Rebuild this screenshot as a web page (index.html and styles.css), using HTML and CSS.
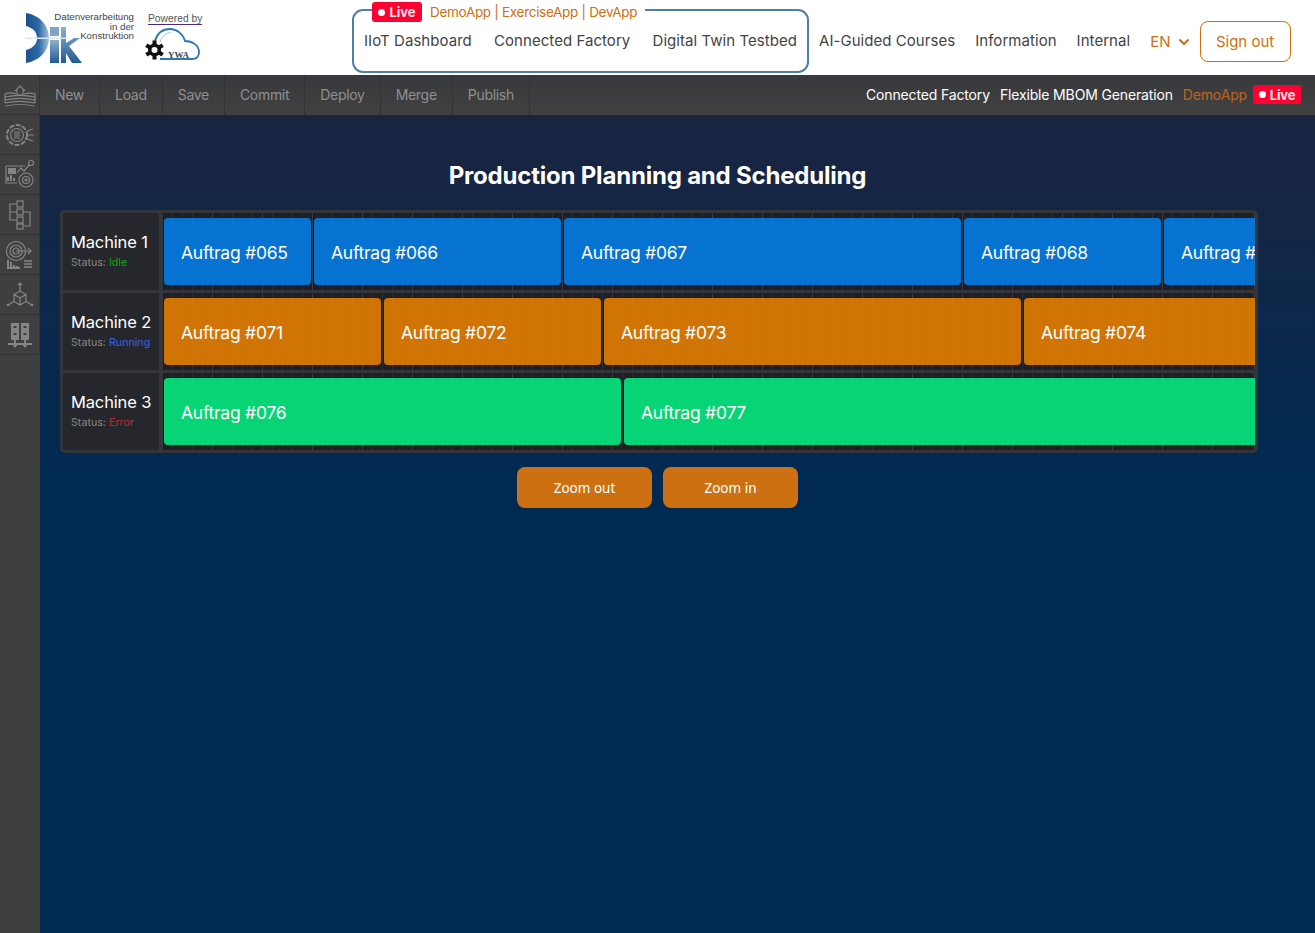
FILE: index.html
```html
<!DOCTYPE html>
<html lang="en">

<head>
    <meta charset="UTF-8">
    <meta name="viewport" content="width=device-width, initial-scale=1.0">
    <title>Production Planning and Scheduling</title>
    <link rel="stylesheet" href="styles.css">
</head>

<body>

    <header class="site-header">
        <div class="logo-group">
            <div class="dik-logo">
                <svg class="dik-mark" width="58" height="51" viewBox="0 0 58 51">
                    <defs>
                        <linearGradient id="dikBlue" x1="0" y1="0" x2="1" y2="0">
                            <stop offset="0" stop-color="#1d4f8c" />
                            <stop offset="0.55" stop-color="#2a6aa8" />
                            <stop offset="1" stop-color="#a9c0d6" />
                        </linearGradient>
                        <linearGradient id="dikSteel" x1="0" y1="0" x2="0" y2="1">
                            <stop offset="0" stop-color="#8fb0cc" />
                            <stop offset="1" stop-color="#1f5a96" />
                        </linearGradient>
                    </defs>
                    <path d="M1 0C14 2 24 12 24 25C24 38 14 48 1 50V37C8 35 12 31 12 25C12 19 8 15 1 13Z" fill="url(#dikBlue)" />
                    <rect x="25" y="14" width="9" height="9" fill="#7fa4c4" />
                    <rect x="25" y="27" width="9" height="23" fill="url(#dikSteel)" />
                    <path d="M36 14H41V30L49 25H55L44 33L57 50H47L41 40V50H36Z" fill="url(#dikSteel)" />
                    <rect x="0" y="24.500" width="42" height="1.500" fill="#dbe6ef" />
                </svg>
                <div class="dik-text">Datenverarbeitung<br>in der<br>Konstruktion</div>
            </div>
            <div class="powered">
                <a class="powered-link" href="#">Powered by</a>
                <svg width="58" height="36" viewBox="0 0 58 36">
                    <path d="M11 15C13 8 18 3 26 3C33 3 39 8 41 15C48 15 55 19 55 26C55 31 52 33 48 33H16" fill="none" stroke="#2c78b4" stroke-width="1.800" />
                    <path d="M16 16C18 10 22 7 27 6.500" fill="none" stroke="#a7c6de" stroke-width="1" />
                    <g fill="#111">
                        <circle cx="10.500" cy="24" r="6.500" />
                        <rect x="8.500" y="14.500" width="4" height="19" />
                        <rect x="8.500" y="14.500" width="4" height="19" transform="rotate(60 10.500 24)" />
                        <rect x="8.500" y="14.500" width="4" height="19" transform="rotate(-60 10.500 24)" />
                    </g>
                    <circle cx="10.500" cy="24" r="3" fill="#fff" />
                    <text class="ywa-text" x="24" y="32">YWA</text>
                </svg>
            </div>
        </div>

        <nav class="main-nav">
            <div class="app-frame">
                <div class="app-legend">
                    <span class="live-badge"><i class="live-dot"></i>Live</span>
                    <span class="app-links">DemoApp | ExerciseApp | DevApp</span>
                </div>
                <a class="nav-link" href="#">IIoT Dashboard</a>
                <a class="nav-link" href="#">Connected Factory</a>
                <a class="nav-link" href="#">Digital Twin Testbed</a>
            </div>
            <a class="nav-link" href="#">AI-Guided Courses</a>
            <a class="nav-link" href="#">Information</a>
            <a class="nav-link" href="#">Internal</a>
            <div class="lang-select">EN
                <svg width="12" height="8" viewBox="0 0 12 8">
                    <path d="M1.500 1.500L6 6L10.500 1.500" fill="none" stroke="#cc7011" stroke-width="2" />
                </svg>
            </div>
            <button class="sign-out">Sign out</button>
        </nav>
    </header>

    <div class="app-body">
        <aside class="sidebar">
            <div class="side-item">
                <svg class="side-icon" viewBox="0 0 32 32">
                    <path d="M11 12L16 7L21 12M13 11V16H19V11" />
                    <path d="M1 15C7 13 10 14 12 15M20 15C24 14 28 14 31 15M1 18C10 16 22 16 31 18M1 21C10 19 22 19 31 21M1 24C10 22 22 22 31 24M2 27C10 25 22 25 30 27M1 15V24M31 15V24" />
                </svg>
            </div>
            <div class="side-item">
                <svg class="side-icon" viewBox="0 0 32 32">
                    <circle cx="13" cy="16" r="10" stroke-dasharray="5 1.500" stroke-width="2" />
                    <circle cx="13" cy="16" r="6.500" />
                    <path d="M10 13H16M10 15H16M10 17H16M10 19H16" />
                    <path d="M24 16H30M23 12L29 10M23 20L29 22" />
                </svg>
            </div>
            <div class="side-item">
                <svg class="side-icon" viewBox="0 0 32 32">
                    <path d="M2 7H21M2 7V24H13" />
                    <rect class="fill" x="4" y="9" width="8" height="6" />
                    <path d="M4 22V18M7 22V16M10 22V19" stroke-width="2" />
                    <path d="M13 14L17 9L20 12L25 6" />
                    <circle cx="27" cy="4" r="2.500" />
                    <circle cx="22" cy="21" r="7" />
                    <circle cx="22" cy="21" r="3.500" />
                    <circle class="fill" cx="22" cy="21" r="1.500" />
                </svg>
            </div>
            <div class="side-item">
                <svg class="side-icon" viewBox="0 0 32 32">
                    <rect x="13" y="2" width="6" height="6" />
                    <rect x="13" y="10" width="6" height="6" />
                    <rect x="13" y="18" width="6" height="6" />
                    <rect x="13" y="25" width="6" height="5" />
                    <path d="M13 5H6V13H13M6 13V21H13M19 13H26V27H19" />
                </svg>
            </div>
            <div class="side-item">
                <svg class="side-icon" viewBox="0 0 32 32">
                    <circle cx="12" cy="12" r="9.500" />
                    <circle cx="12" cy="12" r="6" />
                    <circle cx="12" cy="12" r="3" />
                    <path d="M12 12H27M24 9L27 12L24 15" />
                    <path d="M3 29H16M4 28V21M7 28V23M10 28V26M13 28V27" stroke-width="2" />
                    <path d="M20 22H28M20 25H28M20 28H28" stroke-width="1.500" />
                </svg>
            </div>
            <div class="side-item">
                <svg class="side-icon" viewBox="0 0 32 32">
                    <path d="M16 12L22 15.500V22.500L16 26L10 22.500V15.500ZM10 15.500L16 19L22 15.500M16 19V26" />
                    <path d="M16 12V4M14 6L16 4L18 6M22 22.500L28 26M10 22.500L4 26" />
                    <circle class="fill" cx="28" cy="26" r="1.300" />
                    <circle class="fill" cx="4" cy="26" r="1.300" />
                </svg>
            </div>
            <div class="side-item">
                <svg class="side-icon" viewBox="0 0 32 32">
                    <rect class="fill" x="7" y="4" width="8" height="17" />
                    <rect class="fill" x="17" y="4" width="8" height="17" />
                    <path class="cut" d="M9.500 8H12.500M19.500 8H22.500M9.500 15H12.500M19.500 15H22.500" />
                    <path d="M4 25H28M11 21V28M21 21V28" stroke-width="2" />
                    <path class="fill" d="M7 24L11 29L15 24ZM17 24L21 29L25 24Z" />
                </svg>
            </div>
        </aside>

        <div class="workspace">
            <div class="toolbar">
                <div class="tool-list">
                    <a class="tool-link" href="#">New</a>
                    <a class="tool-link" href="#">Load</a>
                    <a class="tool-link" href="#">Save</a>
                    <a class="tool-link" href="#">Commit</a>
                    <a class="tool-link" href="#">Deploy</a>
                    <a class="tool-link" href="#">Merge</a>
                    <a class="tool-link" href="#">Publish</a>
                </div>
                <div class="crumbs">
                    <span>Connected Factory</span>
                    <span>Flexible MBOM Generation</span>
                    <span class="crumb-app">DemoApp</span>
                    <span class="live-badge live-small"><i class="live-dot"></i>Live</span>
                </div>
            </div>

            <main class="content">
                <h1 class="page-title">Production Planning and Scheduling</h1>

                <div class="gantt">
                    <div class="gantt-row">
                        <div class="machine">
                            <div class="machine-name">Machine 1</div>
                            <div class="machine-status">Status: <span class="idle">Idle</span></div>
                        </div>
                        <div class="track">
                            <div class="job job-blue" style="width: 147px">Auftrag #065</div>
                            <div class="job job-blue" style="width: 247px">Auftrag #066</div>
                            <div class="job job-blue" style="width: 397px">Auftrag #067</div>
                            <div class="job job-blue" style="width: 197px">Auftrag #068</div>
                            <div class="job job-blue" style="width: 247px">Auftrag #069</div>
                        </div>
                    </div>
                    <div class="gantt-row">
                        <div class="machine">
                            <div class="machine-name">Machine 2</div>
                            <div class="machine-status">Status: <span class="running">Running</span></div>
                        </div>
                        <div class="track">
                            <div class="job job-orange" style="width: 217px">Auftrag #071</div>
                            <div class="job job-orange" style="width: 217px">Auftrag #072</div>
                            <div class="job job-orange" style="width: 417px">Auftrag #073</div>
                            <div class="job job-orange" style="width: 317px">Auftrag #074</div>
                        </div>
                    </div>
                    <div class="gantt-row">
                        <div class="machine">
                            <div class="machine-name">Machine 3</div>
                            <div class="machine-status">Status: <span class="error">Error</span></div>
                        </div>
                        <div class="track">
                            <div class="job job-green" style="width: 457px">Auftrag #076</div>
                            <div class="job job-green" style="width: 797px">Auftrag #077</div>
                        </div>
                    </div>
                </div>

                <div class="zoom-buttons">
                    <button class="zoom-btn">Zoom out</button>
                    <button class="zoom-btn">Zoom in</button>
                </div>
            </main>
        </div>
    </div>

</body>

</html>
```

FILE: styles.css
```css
* {
    box-sizing: border-box;
}

html,
body {
    height: 100%;
}

body {
    margin: 0;
    font-family: 'Inter', 'Open Sans', sans-serif;
    display: flex;
    flex-direction: column;
    overflow: hidden;
    background-color: #002a52;
}

a {
    text-decoration: none;
}

/* header */
.site-header {
    height: 75px;
    flex: none;
    display: flex;
    background-color: #fff;
}

.logo-group {
    width: 352px;
    flex: none;
    display: flex;
    padding: 13px 0 0 25px;
}

.dik-logo {
    position: relative;
    width: 110px;
    height: 51px;
}

.dik-text {
    position: absolute;
    top: -1px;
    right: 1px;
    font-family: 'Liberation Sans', sans-serif;
    font-size: 9.700px;
    line-height: 9.500px;
    text-align: right;
    white-space: nowrap;
    color: #444;
}

.powered {
    margin: 0 0 0 13px;
    display: flex;
    flex-direction: column;
    align-items: flex-start;
}

.powered-link {
    font-family: 'Liberation Sans', sans-serif;
    font-size: 10.300px;
    line-height: 11px;
    color: #555;
    border-bottom: 1px solid #4a2a80;
}

.powered svg {
    margin: 1px 0 0 -4px;
}

.ywa-text {
    font-family: 'Liberation Serif', serif;
    font-size: 9px;
    font-weight: bold;
    fill: #444;
}

.main-nav {
    flex: 1;
    display: flex;
    align-items: flex-start;
}

.app-frame {
    position: relative;
    width: 457px;
    height: 64px;
    margin-top: 9px;
    padding: 20px 10px 0;
    display: flex;
    justify-content: space-between;
    border: 2px solid #4f7fa5;
    border-radius: 11px;
}

.app-legend {
    position: absolute;
    top: -10px;
    left: 18px;
    height: 22px;
    padding-right: 8px;
    display: flex;
    align-items: center;
    gap: 8px;
    background-color: #fff;
}

.app-links {
    font-size: 13.500px;
    letter-spacing: -0.3px;
    color: #cc7011;
    margin-top: -1px;
}

.live-badge {
    display: inline-flex;
    align-items: center;
    justify-content: center;
    gap: 4px;
    width: 50px;
    height: 20px;
    font-size: 13px;
    font-weight: 700;
    color: #f5e6e6;
    background-color: #ff0033;
    border-radius: 3px;
}

.live-dot {
    width: 7px;
    height: 7px;
    border-radius: 50%;
    background-color: #fff;
}

.nav-link {
    font-size: 15px;
    line-height: 20px;
    letter-spacing: 0.05px;
    color: #444;
    white-space: nowrap;
}

.main-nav>.nav-link {
    margin: 31px 0 0 20px;
}

.main-nav>.app-frame+.nav-link {
    margin-left: 10px;
}

.lang-select {
    margin: 32px 0 0 20px;
    display: flex;
    align-items: center;
    gap: 7px;
    font-size: 15px;
    line-height: 20px;
    color: #cc7011;
}

.sign-out {
    width: 91px;
    height: 41px;
    margin: 21px 0 0 10px;
    font-family: inherit;
    font-size: 15px;
    color: #cc7011;
    background-color: #fff;
    border: 1px solid #cc7011;
    border-radius: 8px;
}

/* body area */
.app-body {
    flex: 1;
    display: flex;
    min-height: 0;
}

.sidebar {
    width: 40px;
    flex: none;
    background-color: #3f3f3f;
}

.side-item {
    height: 40px;
    display: flex;
    align-items: center;
    justify-content: center;
    border-right: 1px solid #333;
    border-bottom: 1px solid #333;
}

.side-icon {
    width: 32px;
    height: 32px;
    fill: none;
    stroke: #858585;
    stroke-width: 1.200;
}

.side-icon .fill {
    fill: #858585;
    stroke: none;
}

.side-icon .cut {
    stroke: #3f3f3f;
    stroke-width: 2;
}

.workspace {
    flex: 1;
    min-width: 0;
    display: flex;
    flex-direction: column;
}

.toolbar {
    height: 40px;
    flex: none;
    display: flex;
    justify-content: space-between;
    background: linear-gradient(#38393d, #414141);
}

.tool-list {
    display: flex;
}

.tool-link {
    padding: 0 15px;
    font-size: 14px;
    line-height: 39px;
    letter-spacing: -0.3px;
    color: #8f8f8f;
    border-right: 1px solid #333;
}

.crumbs {
    display: flex;
    align-items: center;
    gap: 10px;
    padding: 0 14px 1px 0;
    font-size: 14px;
    letter-spacing: -0.15px;
    color: #fff;
}

.crumb-app {
    color: #c0641a;
}

.live-small {
    width: 48px;
    height: 19px;
    margin-left: -4px;
}

.content {
    flex: 1;
    padding: 0 60px 0 20px;
    background: linear-gradient(#1a2440, #002a52 45%);
}

.page-title {
    margin: 46px 0 19px;
    font-size: 24px;
    line-height: 30px;
    font-weight: 700;
    letter-spacing: -0.2px;
    text-align: center;
    color: #fff;
}

/* gantt */
.gantt {
    margin-right: -3px;
    padding: 3px;
    display: flex;
    flex-direction: column;
    gap: 3px;
    background-color: #33353a;
    border-radius: 5px;
}

.gantt-row {
    display: flex;
    height: 77px;
}

.machine {
    width: 96px;
    flex: none;
    padding: 19px 0 0 8px;
    background-color: #26272c;
}

.machine-name {
    font-size: 16.500px;
    line-height: 20px;
    letter-spacing: -0.15px;
    color: #fff;
    white-space: nowrap;
}

.machine-status {
    margin-top: 4px;
    font-size: 10.700px;
    line-height: 13px;
    color: #85858a;
    white-space: nowrap;
}

.idle {
    color: #12a012;
}

.running {
    color: #3f5fe6;
}

.error {
    color: #bb2d33;
}

.track {
    position: relative;
    flex: 1;
    min-width: 0;
    margin-left: 4px;
    padding: 5px 0 5px 1px;
    display: flex;
    gap: 3px;
    overflow: hidden;
    background-color: #1e1f24;
    background-image:
        repeating-linear-gradient(90deg, #36383d 0, #36383d 1px, transparent 1px, transparent 50px),
        repeating-linear-gradient(90deg, #29292e 0, #29292e 1px, transparent 1px, transparent 10px);
    background-position: -1px 0;
}

.track::after {
    content: "";
    position: absolute;
    top: 0;
    bottom: 0;
    left: 0;
    right: 0;
    background-image: repeating-linear-gradient(90deg, rgba(255, 255, 255, 0.015) 0, rgba(255, 255, 255, 0.015) 1px, transparent 1px, transparent 10px);
    background-position: -1px 0;
    pointer-events: none;
}

.job {
    flex: none;
    height: 67px;
    padding-left: 17px;
    font-size: 17.500px;
    line-height: 69px;
    letter-spacing: -0.25px;
    color: #fff;
    white-space: nowrap;
    border-radius: 4px;
}

.job-blue {
    background-color: #0672d2;
}

.job-orange {
    background-color: #d07405;
}

.job-green {
    background-color: #06d475;
}

.zoom-buttons {
    margin-top: 14px;
    display: flex;
    justify-content: center;
    gap: 11px;
}

.zoom-btn {
    width: 135px;
    height: 41px;
    font-family: 'Noto Sans', sans-serif;
    font-size: 13.500px;
    color: #fff;
    background-color: #cc7011;
    border: none;
    border-radius: 8px;
}
```
